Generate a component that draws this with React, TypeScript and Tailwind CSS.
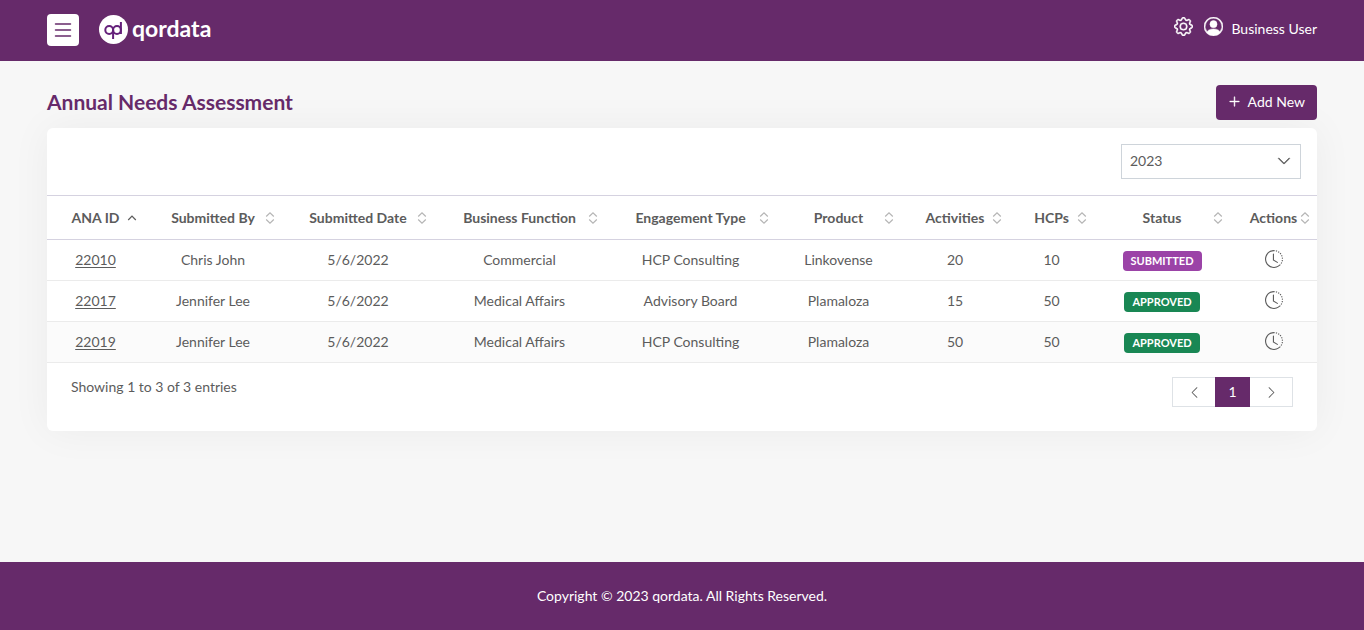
import { BsChevronDown, BsChevronLeft, BsChevronRight, BsClockHistory, BsGear, BsList, BsPersonCircle, BsPlusLg } from "react-icons/bs"

const columns = [
  { label: "ANA ID", width: "w-[97px]", sorted: true },
  { label: "Submitted By", width: "w-[138px]" },
  { label: "Submitted Date", width: "w-[152px]" },
  { label: "Business Function", width: "w-[171px]" },
  { label: "Engagement Type", width: "w-[171px]" },
  { label: "Product", width: "w-[125px]" },
  { label: "Activities", width: "w-[108px]" },
  { label: "HCPs", width: "w-[85px]" },
  { label: "Status", width: "w-[136px]" },
  { label: "Actions", width: "w-[87px]" },
]

const rows = [
  { id: "22010", cells: ["Chris John", "5/6/2022", "Commercial", "HCP Consulting", "Linkovense", "20", "10"], status: "SUBMITTED" },
  { id: "22017", cells: ["Jennifer Lee", "5/6/2022", "Medical Affairs", "Advisory Board", "Plamaloza", "15", "50"], status: "APPROVED" },
  { id: "22019", cells: ["Jennifer Lee", "5/6/2022", "Medical Affairs", "HCP Consulting", "Plamaloza", "50", "50"], status: "APPROVED" },
]

const SortIcon = ({ sorted }: { sorted?: boolean }) => (
  <svg width="10" height="12" viewBox="0 0 10 12" fill="none" stroke={sorted ? "#5c5c5c" : "#b5b5b5"} strokeWidth="1.2" className="justify-self-end">
    {sorted ? <path d="M1.2 8 5 4l3.8 4" /> : <path d="M1.2 4.5 5 .9l3.8 3.6M1.2 7.500 5 11.100l3.8-3.6" />}
  </svg>
)

const Logo = () => (
  <a href="#" className="flex items-center gap-1 text-white">
    <svg width="29" height="29" viewBox="0 0 29 29" fill="none" aria-hidden="true">
      <circle cx="14.5" cy="14.5" r="14.5" fill="#fff" />
      <g stroke="#64207a" strokeWidth="2">
        <circle cx="10.2" cy="15" r="3.900" />
        <circle cx="18" cy="15" r="3.900" />
        <path d="M14.1 15v9M21.900 7v12" />
      </g>
    </svg>
    <span className="-mt-1 text-[23px] leading-7 font-bold">qordata</span>
  </a>
)

const App = () => {
  return (
    <div className="flex min-h-screen flex-col bg-[#f7f7f7] font-['Lato',sans-serif] text-sm text-[#5c5c5c]">
      <header className="flex h-[61px] items-center justify-between bg-[#662a6a] px-[47px] pb-0.5 text-white">
        <div className="flex items-center gap-5">
          <button aria-label="Menu" className="flex h-8 w-8 items-center justify-center rounded bg-white text-[#662a6a]">
            <BsList size={24} />
          </button>
          <Logo />
        </div>
        <div className="flex items-center gap-[11px] pb-1.5">
          <button aria-label="Settings"><BsGear size={19} stroke="currentColor" strokeWidth={0.4} /></button>
          <button className="flex items-center gap-2">
            <BsPersonCircle size={19} stroke="currentColor" strokeWidth={0.4} />
            <span className="pt-1">Business User</span>
          </button>
        </div>
      </header>

      <main className="flex-1 px-[47px] pt-6 pb-8">
        <div className="mb-2 flex h-[35px] items-center justify-between">
          <h1 className="pb-0.5 text-[21px] font-bold text-[#662a6a]">Annual Needs Assessment</h1>
          <button className="flex h-[35px] items-center gap-[7px] rounded bg-[#662a6a] px-3 pb-0.5 text-white">
            <BsPlusLg size={13} stroke="currentColor" strokeWidth={0.6} />
            Add New
          </button>
        </div>

        <section className="rounded-md bg-white pb-6 shadow-[0_0_40px_rgba(0,0,0,0.05)]">
          <div className="flex justify-end p-4">
            <div className="relative w-[180px]">
              <select aria-label="Year" defaultValue="2023" className="h-[35px] w-full appearance-none border border-[#ced4da] bg-white px-2 pb-0.5">
                <option>2023</option>
                <option>2022</option>
              </select>
              <BsChevronDown size={14} stroke="currentColor" strokeWidth={0.6} className="pointer-events-none absolute top-2.5 right-2.5" />
            </div>
          </div>

          <table className="w-full table-fixed text-center">
            <thead>
              <tr className="h-11 border-y border-[#d5d2e0]">
                {columns.map((col) => (
                  <th key={col.label} className={`${col.width} font-bold whitespace-nowrap`}>
                    <button className="grid w-full grid-cols-[1fr_auto_1fr] items-center px-[7px]">
                      <span />
                      {col.label}
                      <SortIcon sorted={col.sorted} />
                    </button>
                  </th>
                ))}
              </tr>
            </thead>
            <tbody>
              {rows.map((row) => (
                <tr key={row.id} className="h-[41px] border-b border-[#ebebeb] last:bg-[#fbfbfb]">
                  <td><a href="#" className="underline underline-offset-2">{row.id}</a></td>
                  {row.cells.map((cell, i) => (
                    <td key={i}>{cell}</td>
                  ))}
                  <td>
                    <span className={`inline-block rounded px-2 text-[11px] leading-5 font-bold text-white ${row.status === "APPROVED" ? "bg-[#198754]" : "bg-[#9b43a7]"}`}>
                      {row.status}
                    </span>
                  </td>
                  <td>
                    <button aria-label="History" className="mx-auto block pb-0.5"><BsClockHistory size={18} /></button>
                  </td>
                </tr>
              ))}
            </tbody>
          </table>

          <div className="flex items-start justify-between px-6 pt-[14px]">
            <p>Showing 1 to 3 of 3 entries</p>
            <nav aria-label="Pagination" className="flex h-[30px]">
              <button aria-label="Previous" className="flex w-[43px] items-center justify-center border border-r-0 border-[#dee2e6]"><BsChevronLeft size={13} /></button>
              <button className="w-[35px] bg-[#662a6a] text-white">1</button>
              <button aria-label="Next" className="flex w-[43px] items-center justify-center border border-l-0 border-[#dee2e6]"><BsChevronRight size={13} /></button>
            </nav>
          </div>
        </section>
      </main>

      <footer className="flex h-[68px] items-center justify-center bg-[#662a6a] text-white">
        <p>Copyright © 2023 qordata. All Rights Reserved.</p>
      </footer>
    </div>
  )
}

export default App
